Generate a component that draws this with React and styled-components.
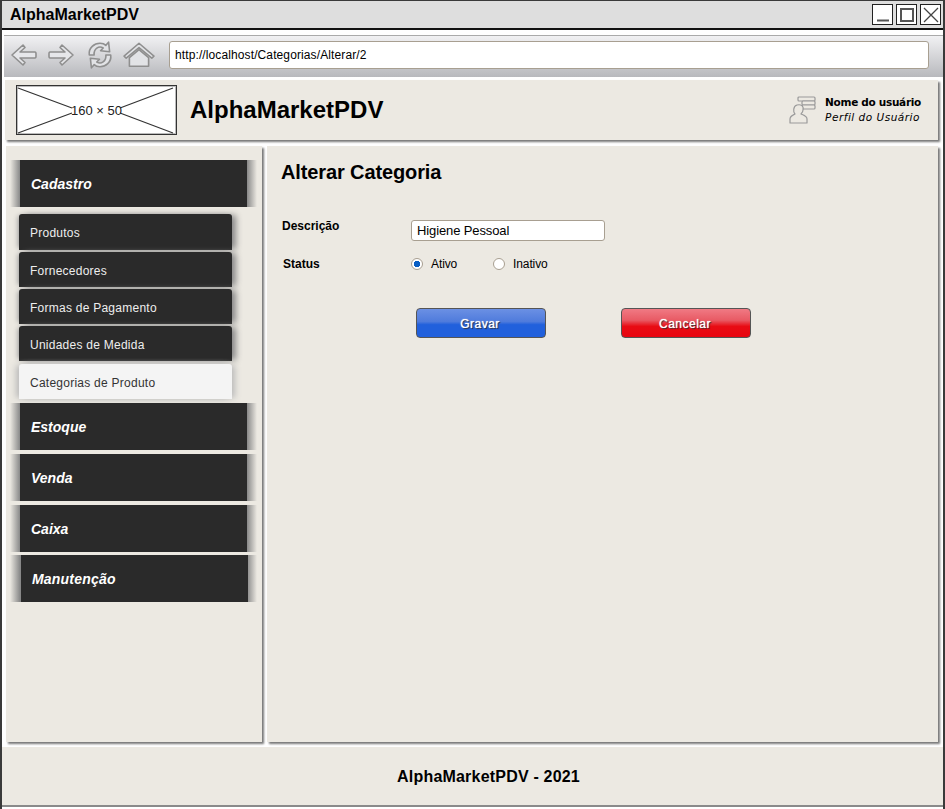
import React from "react";
import styled, { createGlobalStyle } from "styled-components";

const Global = createGlobalStyle`
  html, body { margin: 0; padding: 0; background: #fff; }
  * { box-sizing: border-box; }
`;

const sub_items = ["Produtos", "Fornecedores", "Formas de Pagamento", "Unidades de Medida"];
const other_groups = [
  { label: "Estoque", top: 4 },
  { label: "Venda", top: 4 },
  { label: "Caixa", top: 4 },
  { label: "Manutenção", top: 3, shift: 1 },
];

const App = () => {
  return (
    <Win>
      <Global />
      <TitleBar>
        <WinTitle>AlphaMarketPDV</WinTitle>
        <WinButtons>
          <WinButton>
            <svg width="18" height="18" viewBox="0 0 18 18"><path d="M3 14.5h12" stroke="#555" strokeWidth="2" /></svg>
          </WinButton>
          <WinButton>
            <svg width="18" height="18" viewBox="0 0 18 18"><rect x="3" y="3" width="12" height="12" fill="none" stroke="#555" strokeWidth="2" /></svg>
          </WinButton>
          <WinButton>
            <svg width="18" height="18" viewBox="0 0 18 18"><path d="M2 2l14 14M16 2L2 16" stroke="#444" strokeWidth="1.3" /></svg>
          </WinButton>
        </WinButtons>
      </TitleBar>

      <Toolbar>
        <NavIcons>
          <svg width="28" height="24" viewBox="0 0 28 24">
            <path d="M13 2L2 12l11 10 2-2.500L10 15h15a1.500 1.500 0 0 0 1-1.500v-3A1.500 1.500 0 0 0 25 9H10l5-4.500z" fill="#e6e7ea" stroke="#8f8f8f" strokeWidth="1.600" strokeLinejoin="round" />
          </svg>
          <svg width="28" height="24" viewBox="0 0 28 24">
            <path d="M15 2l11 10-11 10-2-2.500L18 15H3a1.500 1.500 0 0 1-1-1.500v-3A1.500 1.500 0 0 1 3 9h15l-5-4.500z" fill="#e6e7ea" stroke="#8f8f8f" strokeWidth="1.600" strokeLinejoin="round" />
          </svg>
          <svg width="28" height="30" viewBox="0 0 26 28">
            <path d="M3 14C2 7 8 3 13 3c2.500 0 4.500 1 5.500 2L21 2l1 9-8.500-1 2.500-2.500c-4-2.500-9 .5-8.500 6.500z" fill="#e2e3e6" stroke="#8f8f8f" strokeWidth="1.500" strokeLinejoin="round" />
            <path d="M23 14c1 7-5 11-10 11-2.500 0-4.500-1-5.500-2L5 26l-1-9 8.500 1-2.500 2.500c4 2.500 9-.5 8.500-6.500z" fill="#e2e3e6" stroke="#8f8f8f" strokeWidth="1.500" strokeLinejoin="round" />
          </svg>
          <svg width="32" height="26" viewBox="0 0 30 24">
            <path d="M15 1L1 13l2 2L15 5l12 10 2-2z" fill="#e2e3e6" stroke="#8f8f8f" strokeWidth="1.500" strokeLinejoin="round" />
            <path d="M6 14.500L15 7l9 7.500V22.500H6z" fill="#e2e3e6" stroke="#8f8f8f" strokeWidth="1.500" strokeLinejoin="round" />
          </svg>
        </NavIcons>
        <AddressBar>http://localhost/Categorias/Alterar/2</AddressBar>
      </Toolbar>

      <Header>
        <Placeholder>
          <svg width="159" height="48" viewBox="-1 -1 159 48">
            <path d="M0 1l54 20M155 1l-53 20M0 46l54-20M155 46l-53-20" stroke="#333" strokeWidth="1.200" />
          </svg>
          <PlaceholderText>160 × 50</PlaceholderText>
        </Placeholder>
        <AppName>AlphaMarketPDV</AppName>
        <UserBox>
          <svg width="28" height="30" viewBox="0 0 28 30">
            <g fill="#ece9e2" stroke="#9a9a9a" strokeWidth="1.200">
              <rect x="9" y="2" width="17" height="4" rx="1" />
              <rect x="13" y="6" width="13" height="4" rx="1" />
              <rect x="13" y="10" width="13" height="4" rx="1" />
              <path d="M1 28v-4c0-3 3-4 5-5-2-2-2-8 2-9 4-1 7 1 6 5 0 2-1 3-2 4 2 1 6 2 6 5v4z" strokeLinejoin="round" />
            </g>
          </svg>
          <UserText>
            <UserName>Nome do usuário</UserName>
            <UserRole>Perfil do Usuário</UserRole>
          </UserText>
        </UserBox>
      </Header>

      <Body>
        <Sidebar>
          <MenuHead>
            <MenuHeadLabel>Cadastro</MenuHeadLabel>
          </MenuHead>
          <SubList>
            {sub_items.map((item) => (
              <SubItem key={item}>{item}</SubItem>
            ))}
            <ActiveSub>Categorias de Produto</ActiveSub>
          </SubList>
          {other_groups.map((group) => (
            <MenuHead key={group.label} $top={group.top} $shift={group.shift}>
              <MenuHeadLabel $shift={group.shift}>{group.label}</MenuHeadLabel>
            </MenuHead>
          ))}
        </Sidebar>

        <Content>
          <PageTitle>Alterar Categoria</PageTitle>
          <FormRow>
            <FieldLabel>Descrição</FieldLabel>
            <TextField defaultValue="Higiene Pessoal" />
          </FormRow>
          <StatusRow>
            <StatusLabel>Status</StatusLabel>
            <RadioOption $width={82}>
              <RadioDot $on />
              Ativo
            </RadioOption>
            <RadioOption>
              <RadioDot />
              Inativo
            </RadioOption>
          </StatusRow>
          <Actions>
            <ActionButton $color="blue">Gravar</ActionButton>
            <ActionButton $color="red">Cancelar</ActionButton>
          </Actions>
        </Content>
      </Body>

      <Footer>AlphaMarketPDV - 2021</Footer>
    </Win>
  );
};

const Win = styled.div`
  width: 945px;
  height: 809px;
  overflow: hidden;
  background: #fff;
  border-left: 2px solid #3a3a3a;
  border-right: 2px solid #3a3a3a;
  border-top: 1px solid #3a3a3a;
  display: flex;
  flex-direction: column;
  font-family: "Liberation Sans", Arial, sans-serif;
  color: #000;
`;

const TitleBar = styled.div`
  height: 29px;
  flex: none;
  background: #dedede;
  border-bottom: 2px solid #111;
  display: flex;
  align-items: center;
  justify-content: space-between;
  padding: 0 2px 0 8px;
`;

const WinTitle = styled.div`
  font-size: 16px;
  font-weight: bold;
`;

const WinButtons = styled.div`
  display: flex;
  gap: 3px;
`;

const WinButton = styled.div`
  width: 21px;
  height: 21px;
  background: #fff;
  border: 1px solid #222;
  display: flex;
  align-items: center;
  justify-content: center;
`;

const Toolbar = styled.div`
  flex: none;
  height: 42px;
  margin: 5px 0 3px 2px;
  border-top: 1px solid #aaa;
  background: linear-gradient(#f1f1f3, #b8b9bd);
  display: flex;
  align-items: center;
  padding: 0 14px 4px 6px;
`;

const NavIcons = styled.div`
  width: 159px;
  flex: none;
  display: flex;
  align-items: center;
  gap: 9px;
  svg:nth-child(3) { margin-left: 2px; }
`;

const AddressBar = styled.div`
  flex: 1;
  height: 28px;
  background: #fff;
  border: 1px solid #a89f91;
  border-radius: 3px;
  font-size: 12px;
  letter-spacing: 0.11px;
  line-height: 26px;
  padding-left: 5px;
`;

const Header = styled.div`
  flex: none;
  height: 60px;
  margin: 0 5px 0 3px;
  background: #ece9e2;
  box-shadow: 2px 2px 2px #777;
  display: flex;
  align-items: center;
  padding: 0 17px 0 11px;
`;

const Placeholder = styled.div`
  position: relative;
  width: 161px;
  height: 50px;
  background: #fff;
  border: 1px solid #333;
  box-shadow: inset 0 0 0 1px #bbb;
  flex: none;
  svg { display: block; }
`;

const PlaceholderText = styled.span`
  position: absolute;
  inset: 0;
  display: flex;
  align-items: center;
  justify-content: center;
  font-size: 13px;
  color: #222;
`;

const AppName = styled.div`
  font-size: 24px;
  font-weight: bold;
  margin-left: 13px;
`;

const UserBox = styled.div`
  margin-left: auto;
  display: flex;
  align-items: center;
  gap: 8px;
`;

const UserText = styled.div`
  font-family: "DejaVu Sans", sans-serif;
  font-size: 10.5px;
  line-height: 15px;
`;

const UserName = styled.div`
  font-weight: bold;
  letter-spacing: -0.3px;
`;

const UserRole = styled.div`
  font-style: italic;
  letter-spacing: 0.5px;
`;

const Body = styled.div`
  flex: none;
  height: 596px;
  margin-top: 6px;
  display: flex;
  gap: 5px;
  padding-left: 4px;
`;

const Sidebar = styled.div`
  width: 256px;
  background: #ece9e2;
  box-shadow: 2px 2px 2px #777;
  padding: 14px 0 0 4px;
`;

const MenuHead = styled.div`
  position: relative;
  width: 247px;
  height: 47px;
  margin-top: ${(p) => p.$top || 0}px;
  padding: 0 10px;
  background: linear-gradient(
    to right,
    #ece9e2 0,
    #888 10px,
    #888 237px,
    #ece9e2 247px
  );
  &::before {
    content: "";
    position: absolute;
    left: 10px;
    right: 10px;
    top: 0;
    bottom: 0;
    background: #2a2a2a;
    transform: translateX(${(p) => p.$shift || 0}px);
  }
`;

const MenuHeadLabel = styled.span`
  position: relative;
  display: block;
  font-size: 14px;
  font-weight: bold;
  font-style: italic;
  line-height: 49px;
  padding-left: ${(p) => 11 + (p.$shift || 0)}px;
  letter-spacing: ${(p) => (p.$shift ? "0.2px" : "0")};
  color: #fff;
`;

const SubList = styled.div`
  margin: 7px 0 0 9px;
  display: flex;
  flex-direction: column;
  gap: 2px;
`;

const SubItem = styled.div`
  width: 213px;
  height: 35px;
  background: #2a2a2a;
  border-radius: 3px 3px 0 0;
  box-shadow: 5px 0 6px -1px #888, -3px 0 5px -2px #999;
  color: #eee;
  font-size: 12px;
  letter-spacing: 0.25px;
  line-height: 38px;
  padding-left: 11px;
  &:first-child { height: 36px; }
`;

const ActiveSub = styled(SubItem)`
  margin-top: 1px;
  background: #f4f4f4;
  color: #333;
  box-shadow: 4px 0 6px -1px #bbb, -4px 0 6px -1px #bbb;
`;

const Content = styled.div`
  flex: 1;
  margin-right: 5px;
  background: #ece9e2;
  box-shadow: 2px 2px 2px #777;
  padding: 14px 0 0 14px;
`;

const PageTitle = styled.h1`
  margin: 0;
  font-size: 20px;
  font-weight: bold;
  line-height: 24px;
  letter-spacing: -0.12px;
`;

const FormRow = styled.div`
  display: flex;
  align-items: flex-start;
  margin-top: 36px;
`;

const FieldLabel = styled.div`
  width: 130px;
  font-size: 12px;
  font-weight: bold;
  padding: 0 0 0 1px;
  margin-top: -1px;
`;

const TextField = styled.input`
  width: 194px;
  height: 21px;
  border: 1px solid #a89f91;
  border-radius: 3px;
  background: #fff;
  font-family: inherit;
  font-size: 13px;
  letter-spacing: -0.12px;
  padding: 0 5px;
  margin: 0;
  outline: none;
`;

const StatusRow = styled.div`
  display: flex;
  align-items: center;
  margin-top: 13px;
  height: 20px;
`;

const StatusLabel = styled(FieldLabel)`
  padding-left: 2px;
  margin-top: 0;
`;

const RadioOption = styled.div`
  width: ${(p) => (p.$width ? `${p.$width}px` : "auto")};
  display: flex;
  align-items: center;
  gap: 8px;
  font-size: 12px;
  letter-spacing: -0.1px;
`;

const RadioDot = styled.span`
  width: 12px;
  height: 12px;
  border-radius: 50%;
  background: ${(p) => (p.$on ? "radial-gradient(circle, #0a5fc4 0 3px, #fff 3.5px)" : "#fff")};
  border: 1px solid #a89f91;
`;

const Actions = styled.div`
  display: flex;
  gap: 75px;
  margin: 34px 0 0 135px;
`;

const ActionButton = styled.button`
  width: 130px;
  height: 30px;
  border: 1px solid #555;
  border-radius: 4px;
  color: #fff;
  font-family: inherit;
  font-size: 12px;
  font-weight: normal;
  letter-spacing: 0.5px;
  padding: 1px 2px 0 0;
  text-shadow: 0 0 1px #fff, 1px 1px 1px #222;
  background: ${(p) =>
    p.$color === "blue"
      ? "linear-gradient(#6b90e4, #4f7bdc 45%, #2160dc 56%, #2160dc)"
      : "linear-gradient(#f07a84, #e85a64 40%, #e80c14 62%, #e80510)"};
`;

const Footer = styled.div`
  flex: none;
  height: 60px;
  margin-top: 5px;
  padding: 2px 0 0 32px;
  background: #ece9e2;
  border-bottom: 2px solid #8a8a8a;
  display: flex;
  align-items: center;
  justify-content: center;
  font-size: 16px;
  font-weight: bold;
  letter-spacing: 0.2px;
`;

export default App;
